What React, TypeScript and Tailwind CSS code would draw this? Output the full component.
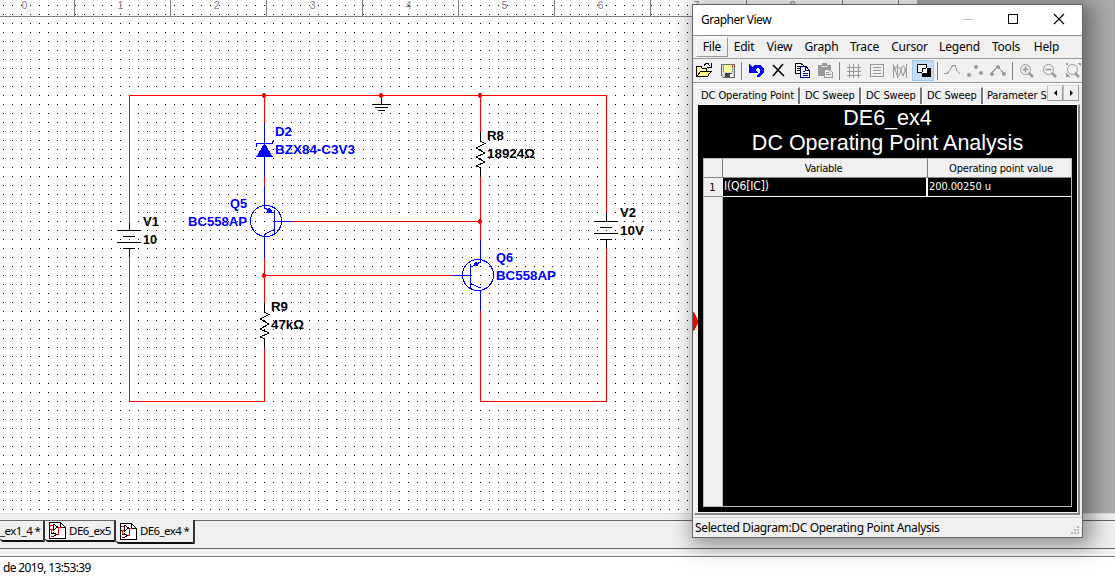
import React from "react";

const NUMS = [0, 1, 2, 3, 4, 5, 6, 7, 8];

function T({ x, y, w, blue, children }: { x: number; y: number; w: number; blue?: boolean; children: string }) {
  return (
    <text x={x} y={y} textLength={w} lengthAdjust="spacingAndGlyphs" fill={blue ? "#0000ff" : "#000"}>
      {children}
    </text>
  );
}

function Schematic() {
  return (
    <svg width="917" height="513" className="block" shapeRendering="crispEdges" fill="none" fontFamily="Liberation Sans, sans-serif">
      <defs>
        <pattern id="dots" x="3" y="5" width="9" height="9" patternUnits="userSpaceOnUse">
          <rect width="1" height="1" fill="#000" />
        </pattern>
      </defs>
      <rect x="0" y="5" width="700" height="507" fill="url(#dots)" />
      <path d="M0 16.5H898" stroke="#808080" />
      {NUMS.map((n) => (
        <g key={n}>
          <path d={`M${74.5 + n * 96} 0V16`} stroke="#808080" />
          <text x={24.5 + n * 96} y="9" fontSize="10" textAnchor="middle" fill="#808080">{n}</text>
        </g>
      ))}
      <path d="M898.5 0V16" stroke="#808080" />
      <g stroke="#ff0000">
        <path d="M129.5 223V95.5H606.5V213M606.5 249V401.5H480.5V311M129.5 257V401.5H264.5V348" />
        <path d="M264.5 95V123M264.5 177V186M291 221.5H480M264.5 258V303M264 275.5H454M480.5 95V132M480.5 177V240" />
      </g>
      <g stroke="#0000ff">
        <path d="M264.5 123V177M256 147V143.5H272L273.5 140.5M264.5 186V206M291 221.5H274M264.5 235V258" />
        <path d="M264.5 143L273 157H256Z" fill="#0000ff" stroke="none" />
        <circle cx="266" cy="221" r="15.5" />
        <path d="M274.5 210V234M264.5 206V208L274 213M274 229.5L264.5 234.5" />
        <path d="M269 207L266 212.5L273 212.5Z" fill="#0000ff" stroke="none" />
        <circle cx="478" cy="275" r="15.5" />
        <path d="M454 275.5H470M470.5 264V288M480.5 240V262L471 267M471 283.5L480.5 288M480.5 290V311" />
        <path d="M476 261L479 266.5L473 266Z" fill="#0000ff" stroke="none" />
      </g>
      <g stroke="#000">
        <path d="M381.5 96V104M372 104.5H391M375 107.5H388M378 110.5H385" />
        <path d="M129.5 223V230M117 230.5H141M123 236.5H135M117 242.5H141M123 248.5H135M129.5 248V257" />
        <path d="M606.5 213V221M594 221.5H618M600 227.5H612M594 233.5H618M600 239.5H612M606.5 239V249" />
        <path d="M264.5 303V312L269 314.5L260 319L269 324L260 329L269 333L260 337L264.5 338.5V348" />
        <path d="M480.5 132V141L485 143.5L476 148L485 153L476 157L485 162L476 166L480.5 167.5V177" />
      </g>
      <g fill="#ff0000">
        {[[264, 95], [381, 95], [480, 95], [480, 221], [264, 275]].map(([x, y]) => (
          <path key={`${x}-${y}`} d={`M${x - 1} ${y - 2}h2v1h1v3h-1v1h-2v-1h-1v-3h1z`} />
        ))}
      </g>
      <g fontSize="12.5" fontWeight="bold">
        <T x={275} y={136} w={17} blue>D2</T>
        <T x={275} y={154} w={80} blue>BZX84-C3V3</T>
        <T x={230} y={208} w={17} blue>Q5</T>
        <T x={188} y={226} w={59} blue>BC558AP</T>
        <T x={496} y={262} w={17} blue>Q6</T>
        <T x={496} y={280} w={60} blue>BC558AP</T>
        <T x={143} y={226} w={16}>V1</T>
        <T x={143} y={244} w={14}>10</T>
        <T x={271} y={311} w={17}>R9</T>
        <T x={271} y={329} w={33}>47kΩ</T>
        <T x={487} y={140} w={17}>R8</T>
        <T x={487} y={158} w={48}>18924Ω</T>
        <T x={620} y={217} w={16}>V2</T>
        <T x={620} y={235} w={24}>10V</T>
      </g>
    </svg>
  );
}

function PageIcon() {
  return (
    <svg width="17" height="17" shapeRendering="crispEdges" fill="none" className="shrink-0">
      <path d="M.5 .5H11.5L16.5 5.5V16.5H.5Z" fill="#fff" stroke="#000" />
      <path d="M11.5 .5V5.5H16.5" stroke="#000" />
      <path d="M1 3.5H4M1 7.5H4M2 14.5H5M7 12.5H9.5V5.5H12M2.5 8V11" stroke="#f00" />
      <path d="M4.5 2V8L8.5 5L4.5 2M4 10L7 12.5L4 15M2 11.5H5" stroke="#000" />
    </svg>
  );
}

function DocTab({ label, className, icon = true }: { label: string; className: string; icon?: boolean }) {
  return (
    <div className={`flex shrink-0 items-center rounded-bl-[4px] border-r-2 border-b-2 border-r-[#333] border-b-[#111] bg-[#f0f0f0] text-[11.5px] whitespace-nowrap ${className}`}>
      {icon && <PageIcon />}
      <span>{label}</span>
    </div>
  );
}

function Toolbar() {
  return (
    <svg width="389" height="24" shapeRendering="crispEdges" fill="none" className="block">
      <g transform="translate(-693 -59)">
        <path d="M741.5 62V80M839.5 62V80M937.5 62V80M1012.5 62V80" stroke="#808080" />
        <g>
          <path d="M696.5 76V66.5H701L702.5 68.5H706.5V71" stroke="#000" fill="#ffffa8" />
          <path d="M697 76.5L700.5 71.5H711L707.5 76.5Z" stroke="#000" fill="#ffff88" />
          <path d="M704 65.5L706 63.5H708L710.5 66.5M711.5 63V67.5H707" stroke="#000" />
        </g>
        <g>
          <path d="M721.5 64.5H734.5V77.5H723.5L721.5 75.5Z" stroke="#666" fill="#d8d8d8" />
          <rect x="724" y="65" width="8" height="7" fill="#ffffa0" />
          <path d="M723.5 64V72M732.5 64V72" stroke="#999" />
          <rect x="725" y="73" width="7" height="4" fill="#444" />
          <rect x="730" y="74" width="2" height="3" fill="#fff" />
          <rect x="732" y="65" width="1" height="2" fill="red" />
        </g>
        <path d="M749 64V73H758L755 70C758 66 762 69 760 72.5C759 74 757 75 756 76L758 77.5C763 75 765 72 763.5 68C761 63 755 64 752 67Z" fill="#0000ff" />
        <path d="M773 65L784 76M783 64L773 76" stroke="#000" strokeWidth="1.5" shapeRendering="auto" />
        <g stroke="#000" fill="#fff">
          <path d="M795.5 63.5H801L804.5 66.5V73.5H795.5Z" />
          <path d="M797 66.5H801M797 68.5H802M797 70.5H802" />
          <path d="M800.5 66.5H806L809.5 70.5V77.5H800.5Z" stroke="#00007a" />
          <path d="M805.5 67V70.5H809M803 71.5H805M803 73.5H808M803 75.5H808" stroke="#00007a" />
        </g>
        <g>
          <path d="M818 65H822V63H827V65H831V76H818Z" fill="#999" />
          <path d="M821 66.5H828" stroke="#ddd" />
          <path d="M824.5 69.5H829L832.5 72.5V77.5H824.5Z" fill="#ececec" stroke="#999" />
          <path d="M826 72.5H829M826 74.5H831" stroke="#999" />
        </g>
        <g stroke="#999">
          <path d="M847 67.5H861M847 71.5H861M847 75.5H861M849.5 64V78M853.5 64V78M858.5 64V78" />
          <path d="M870.5 64.5H883.5V76.5H870.5ZM873 67.5H881M873 70.5H881M873 73.5H881" />
          <path d="M893.5 64V78M897.5 64V78M906.5 64V78" />
          <path d="M893 65C895 66 896 75 898 76S901 67 903 66S905 73 907 74M893 72L896 67L900 68L903 76L906 68" shapeRendering="auto" />
        </g>
        <rect x="912.5" y="60.5" width="21" height="20" fill="#c5def5" stroke="#99c9ef" />
        <path d="M917.5 64.5H926.5V72.5H917.5Z" fill="#fff" stroke="#000" />
        <rect x="922" y="68" width="9" height="9" fill="#000" />
        <path d="M922.5 72V68.5H926.5V72.5Z" fill="#fff" stroke="#000" />
        <path d="M926.5 68V72.5H922" stroke="#fff" />
        <g stroke="#999">
          <path d="M944 73.5H947L950 70L953 65H955L957 71L960 74" />
          <path d="M991 74L998 66L1004 74" />
        </g>
        <g fill="#999" shapeRendering="auto">
          <circle cx="969" cy="75" r="2" /><circle cx="976" cy="67" r="2" /><circle cx="981" cy="73" r="2" />
          <circle cx="992" cy="74" r="2" /><circle cx="998" cy="67" r="2" /><circle cx="1004" cy="74" r="2" />
        </g>
        <g stroke="#999" shapeRendering="auto">
          <circle cx="1025.5" cy="69.5" r="5" /><path d="M1029 73L1033 77" strokeWidth="2.5" /><path d="M1022.5 69.5H1028.5M1025.5 66.5V72.5" strokeWidth="1.5" />
          <circle cx="1048.5" cy="69.5" r="5" /><path d="M1052 73L1056 77" strokeWidth="2.5" /><path d="M1045.5 69.5H1051.5" strokeWidth="1.5" />
          <circle cx="1072.5" cy="69.5" r="5" /><path d="M1075 73L1079 77" strokeWidth="2.5" />
        </g>
        <path d="M1077 63H1081V67ZM1066 73V77H1070ZM1066 63h2v2h-2z" fill="#999" />
      </g>
    </svg>
  );
}

const MENUS: [string, string][] = [
  ["File", "w-[32px]"], ["Edit", "w-[32px]"], ["View", "w-[39px]"], ["Graph", "w-[45px]"], ["Trace", "w-[41px]"],
  ["Cursor", "w-[49px]"], ["Legend", "w-[51px]"], ["Tools", "w-[42px]"], ["Help", "w-[39px]"],
];

const TABS: [string, string, string][] = [
  ["DC Operating Point", "w-[104px]", "tracking-[-0.1px]"],
  ["DC Sweep", "w-[61px]", "tracking-[-0.1px]"],
  ["DC Sweep", "w-[61px]", "tracking-[-0.1px]"],
  ["DC Sweep", "w-[61px]", "tracking-[-0.1px]"],
  ["Parameter S", "w-[64px]", "tracking-[-0.1px]"],
];

function Grapher() {
  return (
    <div className="absolute top-[4px] left-[692px] flex h-[534px] w-[391px] flex-col border border-[#666] bg-[#f0f0f0] font-['Noto_Sans',sans-serif] text-[12px] text-black shadow-[5px_4px_20px_5px_rgba(0,0,0,0.38)]">
      <div className="flex h-[31px] shrink-0 items-center border-b border-[#909090] bg-white pl-2">
        <span className="w-[255px] shrink-0 tracking-[-0.5px]">Grapher View</span>
        <svg width="119" height="30" fill="none" shapeRendering="crispEdges">
          <path d="M7 14.5H17" stroke="#bbb" />
          <rect x="52.5" y="9.5" width="9" height="9" stroke="#000" />
          <path d="M98 9L108 19M108 9L98 19" stroke="#000" strokeWidth="1.1" shapeRendering="auto" />
        </svg>
      </div>
      <div className="flex h-[23px] shrink-0 items-center border-b border-[#999] pl-[3px]">
        {MENUS.map(([m, w], i) => (
          <div key={m} className={`flex h-[20px] shrink-0 items-center justify-center tracking-[-0.2px] ${w} ${i === 0 ? "border-t border-r border-b border-l border-t-white border-r-[#999] border-b-[#999] border-l-white" : ""}`}>{m}</div>
        ))}
      </div>
      <div className="h-[24px] shrink-0 border-b border-[#999]"><Toolbar /></div>
      <div className="flex h-[21px] shrink-0 border-t border-white pt-[3px] pl-[3px] font-['DejaVu_Sans_Condensed','DejaVu_Sans',sans-serif] text-[11px]">
        {TABS.map(([t, w, k], i) => (
          <div key={i} className={`flex h-[17px] shrink-0 items-center border-t border-l border-white whitespace-nowrap ${i < 4 ? "border-r-2 border-r-[#777] pl-[4px]" : "pl-[3px]"} ${w} ${k}`}>{t}</div>
        ))}
        <div className="-mt-[2px] flex h-[16px] shrink-0">
          {["M9 4V10L6 7Z", "M6 4V10L9 7Z"].map((d) => (
            <div key={d} className="h-[16px] w-[16px] border border-t-[#ddd] border-r-[#999] border-b-[#999] border-l-[#bbb]">
              <svg width="14" height="14"><path d={d} /></svg>
            </div>
          ))}
        </div>
      </div>
      <div className="relative mr-[2px] ml-px h-[411px] shrink-0 border-t border-r-2 border-b-2 border-l border-t-white border-r-[#888] border-b-[#888] border-l-white">
        <div className="mr-px ml-[3px] flex h-[407px] flex-col bg-black px-[5px] pb-[5px]">
          <div className="h-[53px] shrink-0 pt-px text-center font-['Liberation_Sans',sans-serif] text-[21.5px] leading-[25px] text-white">
            <div>DE6_ex4</div>
            <div className="whitespace-nowrap">DC Operating Point Analysis</div>
          </div>
          <div className="flex grow flex-col border border-[#bbb] font-['DejaVu_Sans_Condensed','DejaVu_Sans',sans-serif] text-[11px]">
            <div className="flex h-[19px] shrink-0 border-b border-[#888] bg-[#f0f0f0] text-center leading-[19px]">
              <div className="w-[19px] border-r border-[#777]" />
              <div className="w-[205px] border-r border-[#777] pr-[3px] tracking-[-0.3px]">Variable</div>
              <div className="grow pl-[3px] whitespace-nowrap tracking-[-0.2px]">Operating point value</div>
            </div>
            <div className="flex h-[19px] shrink-0 leading-[17px]">
              <div className="w-[19px] border-b border-[#888] bg-[#f0f0f0] pr-[2px] text-center leading-[19px]">1</div>
              <div className="w-[205px] border-r-2 border-b border-white pl-px text-[12px] tracking-[-0.15px] text-white">I(Q6[IC])</div>
              <div className="grow border-b border-white pl-px tracking-[-0.1px] text-white">200.00250 u</div>
            </div>
            <div className="w-[19px] grow border-r border-[#bbb] bg-[#f0f0f0]" />
          </div>
        </div>
        <svg width="5" height="19" className="absolute top-[207px] -left-[2px]" shapeRendering="crispEdges">
          <path d="M0 0H1L5 8V11L1 19H0Z" fill="#f00" />
        </svg>
      </div>
      <div className="mt-[2px] flex grow items-center border-t border-[#d0d0d0] pl-[2px] text-[12px]">
        <span className="w-[376px] tracking-[-0.36px]">Selected Diagram:DC Operating Point Analysis</span>
        <svg width="9" height="9" className="mt-[5px]" fill="#bbb" shapeRendering="crispEdges">
          <path d="M0 6h2v2h-2zM3 6h2v2h-2zM6 6h2v2h-2zM3 3h2v2h-2zM6 3h2v2h-2zM6 0h2v2h-2z" />
        </svg>
      </div>
    </div>
  );
}

export default function App() {
  return (
    <div className="relative flex h-[576px] w-[1115px] flex-col overflow-hidden bg-[#f0f0f0] font-['Noto_Sans',sans-serif] text-[12px] text-black">
      <div className="flex h-[513px] shrink-0 bg-[#ababab]">
        <div className="h-[513px] w-[917px] shrink-0 bg-white"><Schematic /></div>
      </div>
      <div className="h-[7px] shrink-0 border-t border-[#dedede]" />
      <div className="flex h-[29px] shrink-0 items-start border-b border-[#696969]">
        <DocTab label="_ex1_4 *" icon={false} className="h-[22px] w-[45px] border-t border-t-[#696969] tracking-[-0.6px]" />
        <DocTab label="DE6_ex5" className="h-[22px] w-[71px] gap-[3px] border-t border-t-[#696969] pl-[4px] tracking-[-0.5px]" />
        <DocTab label="DE6_ex4 *" className="h-[24px] w-[79px] gap-[3px] pl-[4px] tracking-[-0.6px]" />
        <div className="h-px grow bg-[#696969]" />
      </div>
      <div className="h-[8px] shrink-0 border-b border-[#808080]"><div className="mt-[5px] h-px bg-white" /></div>
      <div className="grow bg-white pl-[3px] leading-[21px] tracking-[-0.65px]">de 2019, 13:53:39</div>
      <Grapher />
    </div>
  );
}
